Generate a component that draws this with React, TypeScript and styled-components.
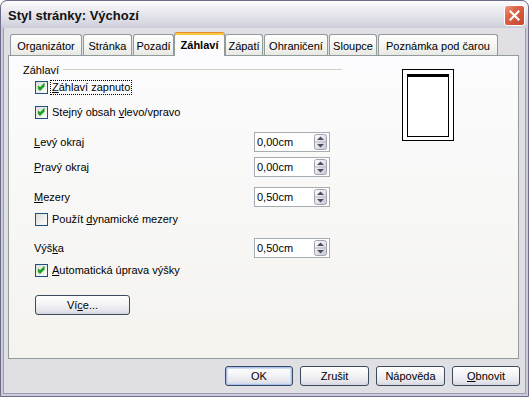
import React from "react";
import styled, { createGlobalStyle } from "styled-components";

const GlobalStyle = createGlobalStyle`
  html, body {
    margin: 0;
    padding: 0;
    background: #ffffff;
  }
  body {
    font-family: "Liberation Sans", Arial, sans-serif;
    font-size: 11px;
    color: #000;
  }
`;

const Window = styled.div`
  width: 529px;
  height: 397px;
  box-sizing: border-box;
  display: flex;
  flex-direction: column;
  background: #e0dfe3;
  border: 1px solid #6c6c8c;
  border-radius: 7px 7px 0 0;
  box-shadow: inset 0 0 0 2px #cbcbd9, inset 0 0 0 3px #9b9bb2;
  overflow: hidden;
`;

const TitleBar = styled.div`
  height: 27px;
  flex: none;
  display: flex;
  align-items: center;
  padding: 0 3px 0 7px;
  background: linear-gradient(#fdfdfd 0%, #ececf1 35%, #d8d8e2 80%, #cdcdd9 100%);
  border-radius: 6px 6px 0 0;
`;

const Title = styled.div`
  flex: 1;
  font-size: 13px;
  font-weight: bold;
  color: #111;
  padding-top: 1px;
`;

const CloseButton = styled.div`
  width: 21px;
  height: 21px;
  box-sizing: border-box;
  border: 1px solid #ffffff;
  border-radius: 3px;
  background: linear-gradient(135deg, #f09a82 0%, #de6448 35%, #c6452c 100%);
  display: flex;
  align-items: center;
  justify-content: center;
  margin-top: 1px;
`;

const Body = styled.div`
  flex: 1;
  display: flex;
  flex-direction: column;
  padding: 4px 9px 0 7px;
`;

const TabStrip = styled.div`
  height: 23px;
  display: flex;
  align-items: flex-end;
  gap: 1px;
  padding-left: 2px;
  position: relative;
  z-index: 1;
`;

const Tab = styled.div<{ $w: number; $active?: boolean }>`
  box-sizing: border-box;
  width: ${({ $w, $active }) => ($active ? $w + 2 : $w)}px;
  height: ${({ $active }) => ($active ? 24 : 21)}px;
  margin: ${({ $active }) => ($active ? "0 -1px -1px" : "0")};
  border: 1px solid #919b9c;
  border-bottom: none;
  border-radius: 3px 3px 0 0;
  display: flex;
  align-items: center;
  justify-content: center;
  font-weight: ${({ $active }) => ($active ? "bold" : "normal")};
  padding-top: ${({ $active }) => ($active ? 0 : 1)}px;
  background: ${({ $active }) =>
    $active ? "#fcfcfe" : "linear-gradient(#ffffff, #f3f3f0 60%, #e8e8e3)"};
  border-top-color: ${({ $active }) => ($active ? "#e68b2c" : "#919b9c")};
  box-shadow: ${({ $active }) => ($active ? "inset 0 2px 0 #ffc83c" : "none")};
  white-space: nowrap;
`;

const Panel = styled.div`
  height: 304px;
  box-sizing: border-box;
  border: 1px solid #919b9c;
  background: linear-gradient(#fcfcfe, #f4f3ee);
  display: grid;
  grid-template-columns: 333px 1fr;
  align-items: start;
`;

const FormColumn = styled.div`
  display: flex;
  flex-direction: column;
  padding: 7px 0 0 14px;
`;

const GroupHeader = styled.div`
  height: 13px;
  display: flex;
  align-items: center;
  gap: 4px;
  &::after {
    content: "";
    flex: 1;
    height: 1px;
    background: #d0d0bf;
  }
`;

const Row = styled.div<{ $top: number }>`
  display: flex;
  align-items: center;
  margin-top: ${({ $top }) => $top}px;
  padding-left: 11px;
`;

const CheckRow = styled(Row)`
  height: 15px;
  padding-left: 12px;
  gap: 2px;
`;

const CheckLabel = styled.span<{ $focused?: boolean }>`
  padding: 0 1px;
  line-height: 13px;
  border: 1px dotted ${({ $focused }) => ($focused ? "#000" : "transparent")};
`;

const FieldRow = styled(Row)`
  height: 20px;
`;

const FieldLabel = styled.div`
  width: 220px;
`;

const SpinField = styled.div`
  width: 76px;
  height: 20px;
  box-sizing: border-box;
  border: 1px solid #a5acb2;
  background: #fff;
  display: flex;
  align-items: center;
  justify-content: space-between;
  padding: 0 2px 0 2px;
`;

const Button = styled.button<{ $w: number; $default?: boolean }>`
  width: ${({ $w }) => $w}px;
  height: 20px;
  box-sizing: border-box;
  border: 1px solid #3c4a5e;
  border-radius: 3px;
  background: linear-gradient(#ffffff, #f4f4f6 45%, #e2e2ea 85%, #d4d4de);
  box-shadow: ${({ $default }) =>
    $default ? "inset 0 0 0 1px #a9c1ec, inset 0 0 0 2px #cddcf5" : "none"};
  font-family: inherit;
  font-size: 11px;
  color: #000;
  padding: 0;
`;

const MoreButton = styled(Button)`
  margin: 17px 0 0 12px;
`;

const Preview = styled.div`
  margin: 13px 0 0 60px;
  width: 52px;
  height: 72px;
  box-sizing: border-box;
  border: 1px solid #000;
  background: #fff;
  padding: 4px 4px 3px;
`;

const PreviewPage = styled.div`
  height: 100%;
  box-sizing: border-box;
  border: 1px solid #000;
  border-top-width: 3px;
`;

const ButtonRow = styled.div`
  display: flex;
  justify-content: flex-end;
  gap: 7px;
  padding-top: 7px;
  margin-right: -1px;
`;

const CheckBox = ({ checked }: { checked: boolean }) => (
  <svg width="13" height="13" viewBox="0 0 13 13">
    <defs>
      <linearGradient id="cbg" x1="0" y1="0" x2="1" y2="1">
        <stop offset="0" stopColor="#dcdcd7" />
        <stop offset="1" stopColor="#ffffff" />
      </linearGradient>
    </defs>
    <rect x="0.5" y="0.5" width="12" height="12" fill="url(#cbg)" stroke="#1c5180" />
    {checked && (
      <path d="M3 5.5 L5 7.5 L9.5 3 M3 6.8 L5 8.8 L9.5 4.3 M3 4.5 L5 6.5 L9.5 2" stroke="#21a121" strokeWidth="1.1" fill="none" transform="translate(0,0.5)" />
    )}
  </svg>
);

const SpinIcon = () => (
  <svg width="13" height="16" viewBox="0 0 13 16">
    <defs>
      <linearGradient id="spg" x1="0" y1="0" x2="1" y2="1">
        <stop offset="0" stopColor="#ffffff" />
        <stop offset="1" stopColor="#c8c8d4" />
      </linearGradient>
    </defs>
    <rect x="0.5" y="0.5" width="12" height="15" rx="2" fill="url(#spg)" stroke="#a2a2b4" />
    <line x1="1" y1="8" x2="12" y2="8" stroke="#b5b5c5" />
    <path d="M3 6 L6.5 2.5 L10 6 Z" fill="#4d4d60" />
    <path d="M3 10 L6.5 13.5 L10 10 Z" fill="#4d4d60" />
  </svg>
);

const CloseIcon = () => (
  <svg width="11" height="11" viewBox="0 0 11 11">
    <path d="M1.5 1.5 L9.5 9.5 M9.5 1.5 L1.5 9.5" stroke="#fff" strokeWidth="2.2" strokeLinecap="square" />
  </svg>
);

const tabs = [
  { label: "Organizátor", w: 72 },
  { label: "Stránka", w: 49 },
  { label: "Pozadí", w: 41 },
  { label: "Záhlaví", w: 49, active: true },
  { label: "Zápatí", w: 38 },
  { label: "Ohraničení", w: 64 },
  { label: "Sloupce", w: 48 },
  { label: "Poznámka pod čarou", w: 120 },
];

const Field = ({ label, value, top }: { label: React.ReactNode; value: string; top: number }) => (
  <FieldRow $top={top}>
    <FieldLabel>{label}</FieldLabel>
    <SpinField>
      <span>{value}</span>
      <SpinIcon />
    </SpinField>
  </FieldRow>
);

const Check = ({
  label,
  top,
  checked,
  focused,
}: {
  label: React.ReactNode;
  top: number;
  checked: boolean;
  focused?: boolean;
}) => (
  <CheckRow $top={top}>
    <CheckBox checked={checked} />
    <CheckLabel $focused={focused}>{label}</CheckLabel>
  </CheckRow>
);

export default function App() {
  return (
    <>
      <GlobalStyle />
      <Window>
        <TitleBar>
          <Title>Styl stránky: Výchozí</Title>
          <CloseButton>
            <CloseIcon />
          </CloseButton>
        </TitleBar>
        <Body>
          <TabStrip>
            {tabs.map((t) => (
              <Tab key={t.label} $w={t.w} $active={t.active}>
                {t.label}
              </Tab>
            ))}
          </TabStrip>
          <Panel>
            <FormColumn>
              <GroupHeader>Záhlaví</GroupHeader>
              <Check
                top={4}
                checked
                focused
                label={
                  <>
                    <u>Z</u>áhlaví zapnuto
                  </>
                }
              />
              <Check
                top={10}
                checked
                label={
                  <>
                    Stejný obsah <u>v</u>levo/vpravo
                  </>
                }
              />
              <Field
                top={12}
                value="0,00cm"
                label={
                  <>
                    <u>L</u>evý okraj
                  </>
                }
              />
              <Field
                top={5}
                value="0,00cm"
                label={
                  <>
                    <u>P</u>ravý okraj
                  </>
                }
              />
              <Field
                top={10}
                value="0,50cm"
                label={
                  <>
                    <u>M</u>ezery
                  </>
                }
              />
              <Check
                top={5}
                checked={false}
                label={
                  <>
                    Použít <u>d</u>ynamické mezery
                  </>
                }
              />
              <Field
                top={11}
                value="0,50cm"
                label={
                  <>
                    Výš<u>k</u>a
                  </>
                }
              />
              <Check
                top={5}
                checked
                label={
                  <>
                    <u>A</u>utomatická úprava výšky
                  </>
                }
              />
              <div>
                <MoreButton $w={95}>
                  Ví<u>c</u>e...
                </MoreButton>
              </div>
            </FormColumn>
            <Preview>
              <PreviewPage />
            </Preview>
          </Panel>
          <ButtonRow>
            <Button $w={68} $default>
              OK
            </Button>
            <Button $w={69}>Zrušit</Button>
            <Button $w={69}>Nápověda</Button>
            <Button $w={68}>
              <u>O</u>bnovit
            </Button>
          </ButtonRow>
        </Body>
      </Window>
    </>
  );
}
